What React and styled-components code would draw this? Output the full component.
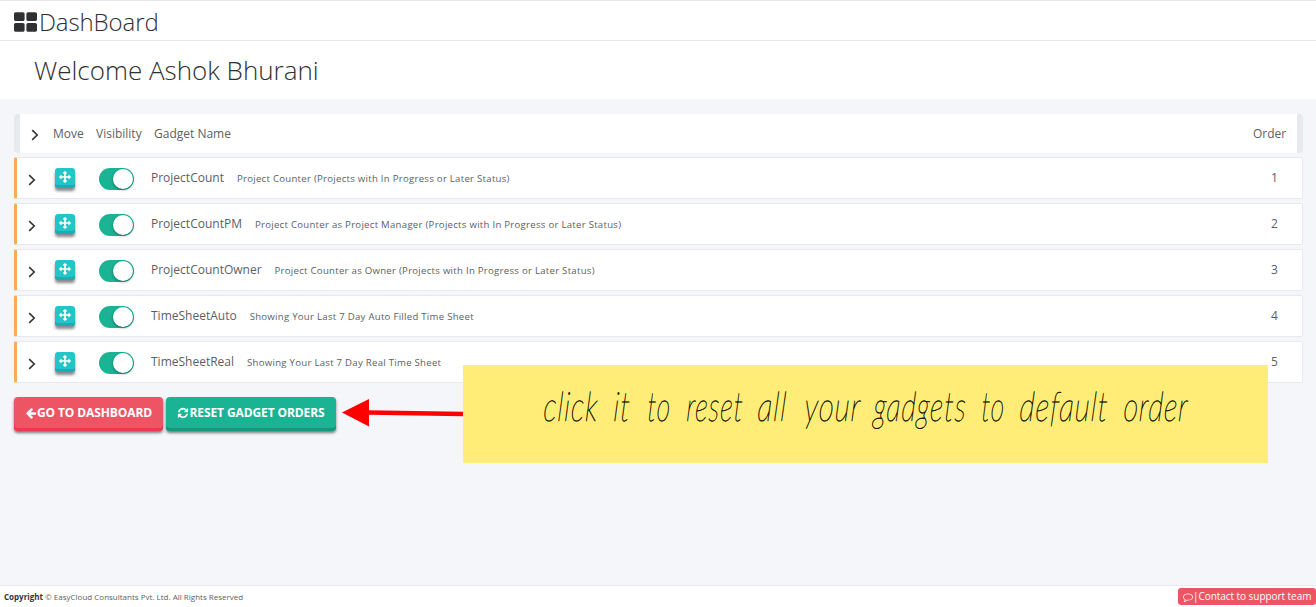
import React from "react";
import styled, { createGlobalStyle } from "styled-components";

const Global = createGlobalStyle`
  * { box-sizing: border-box; }
  html, body { margin: 0; padding: 0; }
  body {
    background: #f4f6fa;
    color: #5c5f61;
    font-family: "Open Sans", "Liberation Sans", sans-serif;
    font-size: 12px;
    overflow: hidden;
  }
`;

const Page = styled.div`
  position: relative;
  display: flex;
  flex-direction: column;
  height: 607px;
  border-top: 1px solid #e4e7eb;
`;
const TopBar = styled.header`
  display: flex;
  align-items: center;
  height: 40px;
  padding: 2px 14px 0;
  background: #fff;
  border-bottom: 1px solid #e4e7eb;
  color: #2f3032;
`;
const BarTitle = styled.h1`
  margin: 0 0 0 2px;
  font-size: 24px;
  line-height: 36px;
  font-weight: 300;
  letter-spacing: -0.1px;
  white-space: nowrap;
`;
const Welcome = styled.h2`
  margin: 0;
  height: 58px;
  padding: 0 34px;
  background: #fff;
  color: #2f3032;
  font-size: 26px;
  line-height: 59px;
  font-weight: 300;
  white-space: nowrap;
`;
const Main = styled.main`
  flex: 1;
  padding: 15px 13px 0 14px;
`;
const HeadRow = styled.div`
  display: flex;
  align-items: center;
  height: 39px;
  padding: 0 10px 0 11px;
  background: #fff;
  border: solid #e7eaec;
  border-width: 0 6px;
  border-radius: 4px;
`;
const HeadCell = styled.span`
  width: ${(p) => p.$w || "auto"};
  line-height: 39px;
  white-space: nowrap;
`;
const Rows = styled.div`
  display: flex;
  flex-direction: column;
  gap: 4px;
  margin-top: 4px;
`;
const Row = styled.div`
  display: flex;
  align-items: center;
  height: 42px;
  padding: 0 24px 0 11px;
  background: #fff;
  border: 1px solid #e7eaec;
  border-left: 3px solid #f8ac59;
  border-radius: 2px;
`;
const Chevron = styled.svg`
  flex: none;
  width: 8px;
  height: 12px;
  margin-top: 3px;
  margin-right: ${(p) => p.$gap};
  fill: none;
  stroke: #333;
  stroke-width: 1.6;
`;
const MoveButton = styled.button`
  display: flex;
  align-items: center;
  justify-content: center;
  width: 20px;
  height: 20px;
  margin: 0 24px 0 0;
  padding: 0 0 3px;
  border: 0;
  border-radius: 3px;
  color: #fff;
  background: #23c6c8;
  box-shadow: inset 0 -3px 0 #1eacae, 0 3px 3px #8a8a8a;
`;
const Switch = styled.span`
  display: flex;
  justify-content: flex-end;
  width: 35px;
  height: 22px;
  margin: 2px 17px 0 0;
  padding: 1px;
  border-radius: 11px;
  background: #1ab394;
`;
const Knob = styled.span`
  width: 20px;
  height: 20px;
  border-radius: 50%;
  background: #fff;
  box-shadow: 0 1px 3px rgba(0, 0, 0, 0.4);
`;
const Name = styled.span`
  margin-right: 13px;
  padding-bottom: 2px;
  white-space: nowrap;
`;
const Description = styled.span`
  flex: 1;
  font-size: 9.6px;
  letter-spacing: 0.275px;
  white-space: nowrap;
`;
const Order = styled.span`
  width: 7px;
  padding-bottom: 2px;
`;
const Actions = styled.div`
  display: flex;
  gap: 3px;
  margin-top: 14px;
`;
const ActionButton = styled.button`
  display: flex;
  align-items: center;
  justify-content: center;
  width: ${(p) => p.$w};
  height: 34px;
  padding: 0 0 3px;
  border: 0;
  border-radius: 4px;
  color: #fff;
  font: 700 12px "Open Sans", sans-serif;
  letter-spacing: -0.1px;
  white-space: nowrap;
  background: ${(p) => p.$bg};
  box-shadow: inset 0 -3px 0 ${(p) => p.$edge}, 0 2px 3px #777;
`;
const Footer = styled.footer`
  display: flex;
  justify-content: space-between;
  height: 22px;
  padding: 2px 0 0 4px;
  background: #fff;
  border-top: 1px solid #e7eaec;
  font-size: 8px;
  line-height: 17px;
  b { color: #333; }
`;
const Support = styled.a`
  display: flex;
  align-items: center;
  width: 138px;
  height: 17px;
  padding-left: 5px;
  border-radius: 3px;
  background: #ed5565;
  color: #fff;
  font-size: 10px;
  letter-spacing: -0.05px;
  white-space: nowrap;
`;
const Note = styled.div`
  position: absolute;
  left: 463px;
  top: 364px;
  width: 805px;
  height: 98px;
  padding: 9px 0 0 80px;
  background: #ffed78;
  color: #141400;
`;
const Handwriting = styled.span`
  display: flex;
  font: italic 100 41px/64px Lato, sans-serif;
  letter-spacing: 1.6px;
  -webkit-text-stroke: 0.7px #141400;
`;
const Word = styled.span`
  flex: none;
  width: ${(p) => p.$w}px;
  white-space: nowrap;
  transform: scaleX(${(p) => p.$s}) skewX(-4deg);
  transform-origin: 0 70%;
`;
const Arrow = styled.svg`
  position: absolute;
  left: 341px;
  top: 396px;
  width: 122px;
  height: 32px;
`;
const IconSvg = styled.svg`
  flex: none;
  fill: currentColor;
`;

const paths = {
  grid: "M832 1024v384q0 52-38 90t-90 38h-512q-52 0-90-38t-38-90v-384q0-52 38-90t90-38h512q52 0 90 38t38 90zm0-768v384q0 52-38 90t-90 38h-512q-52 0-90-38t-38-90v-384q0-52 38-90t90-38h512q52 0 90 38t38 90zm896 768v384q0 52-38 90t-90 38h-512q-52 0-90-38t-38-90v-384q0-52 38-90t90-38h512q52 0 90 38t38 90zm0-768v384q0 52-38 90t-90 38h-512q-52 0-90-38t-38-90v-384q0-52 38-90t90-38h512q52 0 90 38t38 90z",
  left: "M1664 896v128q0 53-32.5 90.5t-84.5 37.5h-704l293 294q38 36 38 90t-38 90l-75 76q-37 37-90 37-52 0-91-37l-651-652q-37-37-37-90 0-52 37-91l651-650q38-38 91-38 52 0 90 38l75 74q38 38 38 91t-38 91l-293 293h704q52 0 84.5 37.5t32.5 90.5z",
  refresh: "M1639 1056q0 5-1 7-64 268-268 434.5t-478 166.5q-146 0-282.5-55t-243.5-157l-129 129q-19 19-45 19t-45-19-19-45v-448q0-26 19-45t45-19h448q26 0 45 19t19 45-19 45l-137 137q71 66 161 102t187 36q134 0 250-65t186-179q11-17 53-117 8-23 30-23h192q13 0 22.5 9.5t9.5 22.5zm25-800v448q0 26-19 45t-45 19h-448q-26 0-45-19t-19-45 19-45l138-138q-148-137-349-137-134 0-250 65t-186 179q-11 17-53 117-8 23-30 23h-199q-13 0-22.5-9.5t-9.5-22.5v-7q65-268 270-434.5t480-166.5q146 0 284 55.5t245 156.5l130-129q19-19 45-19t45 19 19 45z",
  move: "M1792 896q0 26-19 45l-256 256q-19 19-45 19t-45-19-19-45v-128h-384v384h128q26 0 45 19t19 45-19 45l-256 256q-19 19-45 19t-45-19l-256-256q-19-19-19-45t19-45 45-19h128v-384h-384v128q0 26-19 45t-45 19-45-19l-256-256q-19-19-19-45t19-45l256-256q19-19 45-19t45 19 19 45v128h384v-384h-128q-26 0-45-19t-19-45 19-45l256-256q19-19 45-19t45 19l256 256q19 19 19 45t-19 45-45 19h-128v384h384v-128q0-26 19-45t45-19 45 19l256 256q19 19 19 45z",
  comment: "M896 384q-204 0-381.5 69.5t-282 187.5-104.5 255q0 112 71.5 213.5t201.5 175.5l87 50-27 96q-24 91-70 172 152-63 275-171l43-38 57 6q69 8 130 8 204 0 381.5-69.5t282-187.5 104.5-255-104.5-255-282-187.5-381.5-69.5zm896 512q0 174-120 321.5t-326 233-450 85.5q-70 0-145-8-198 175-460 242-49 14-114 22h-5q-15 0-27-10.5t-16-27.5v-1q-3-4-.5-12t2-10 4.5-9.5l6-9 7-8.5 8-9q7-8 31-34.5t34.5-38 31-39.5 32.5-51 27-59 26-76q-157-89-247.5-220t-90.5-281q0-174 120-321.5t326-233 450-85.5 450 85.5 326 233 120 321.5z",
};

const Icon = ({ name, size, box = "0 0 1792 1792", height }) => (
  <IconSvg width={size} height={height || size} viewBox={box} aria-hidden="true">
    <path d={paths[name]} />
  </IconSvg>
);
const Expand = ({ gap }) => (
  <Chevron viewBox="0 0 8 12" $gap={gap}>
    <path d="M1.2 1.2 6.2 6 1.2 10.8" />
  </Chevron>
);

const gadgets = [
  ["ProjectCount", "Project Counter (Projects with In Progress or Later Status)"],
  ["ProjectCountPM", "Project Counter as Project Manager (Projects with In Progress or Later Status)"],
  ["ProjectCountOwner", "Project Counter as Owner (Projects with In Progress or Later Status)"],
  ["TimeSheetAuto", "Showing Your Last 7 Day Auto Filled Time Sheet"],
  ["TimeSheetReal", "Showing Your Last 7 Day Real Time Sheet"],
];

// word, advance to the next word, horizontal condensing
const words = [
  ["click", 70, 0.7],
  ["it", 34, 0.7],
  ["to", 39, 0.64],
  ["reset", 71, 0.66],
  ["all", 47, 0.73],
  ["your", 69, 0.72],
  ["gadgets", 108, 0.69],
  ["to", 38, 0.64],
  ["default", 104, 0.72],
  ["order", 66, 0.7],
];

export default function App() {
  return (
    <Page>
      <Global />
      <TopBar>
        <Icon name="grid" size={23} height={20} box="64 128 1664 1408" />
        <BarTitle>DashBoard</BarTitle>
      </TopBar>
      <Welcome>Welcome Ashok Bhurani</Welcome>
      <Main>
        <HeadRow>
          <Expand gap="14px" />
          <HeadCell $w="43px">Move</HeadCell>
          <HeadCell $w="58px">Visibility</HeadCell>
          <HeadCell $w="1099px">Gadget Name</HeadCell>
          <HeadCell>Order</HeadCell>
        </HeadRow>
        <Rows>
          {gadgets.map(([name, text], i) => (
            <Row key={name}>
              <Expand gap="19px" />
              <MoveButton>
                <Icon name="move" size={12} />
              </MoveButton>
              <Switch>
                <Knob />
              </Switch>
              <Name>{name}</Name>
              <Description>{text}</Description>
              <Order>{i + 1}</Order>
            </Row>
          ))}
        </Rows>
        <Actions>
          <ActionButton $w="149px" $bg="#ed5565" $edge="#ea394c">
            <Icon name="left" size={12} />
            GO TO DASHBOARD
          </ActionButton>
          <ActionButton $w="170px" $bg="#1ab394" $edge="#16987e">
            <Icon name="refresh" size={12} />
            RESET GADGET ORDERS
          </ActionButton>
        </Actions>
      </Main>
      <Footer>
        <span>
          <b>Copyright</b> © EasyCloud Consultants Pvt. Ltd. All Rights Reserved
        </span>
        <Support>
          <Icon name="comment" size={10} />|Contact to support team
        </Support>
      </Footer>
      <Arrow viewBox="0 0 122 32">
        <path d="M1 15.5 28 2v27.500z" fill="#f00" />
        <path d="M27 15.500 122 17" stroke="#f00" strokeWidth="4.500" />
      </Arrow>
      <Note>
        <Handwriting>
          {words.map(([word, w, s], i) => (
            <Word key={i} $w={w} $s={s}>{word}</Word>
          ))}
        </Handwriting>
      </Note>
    </Page>
  );
}
